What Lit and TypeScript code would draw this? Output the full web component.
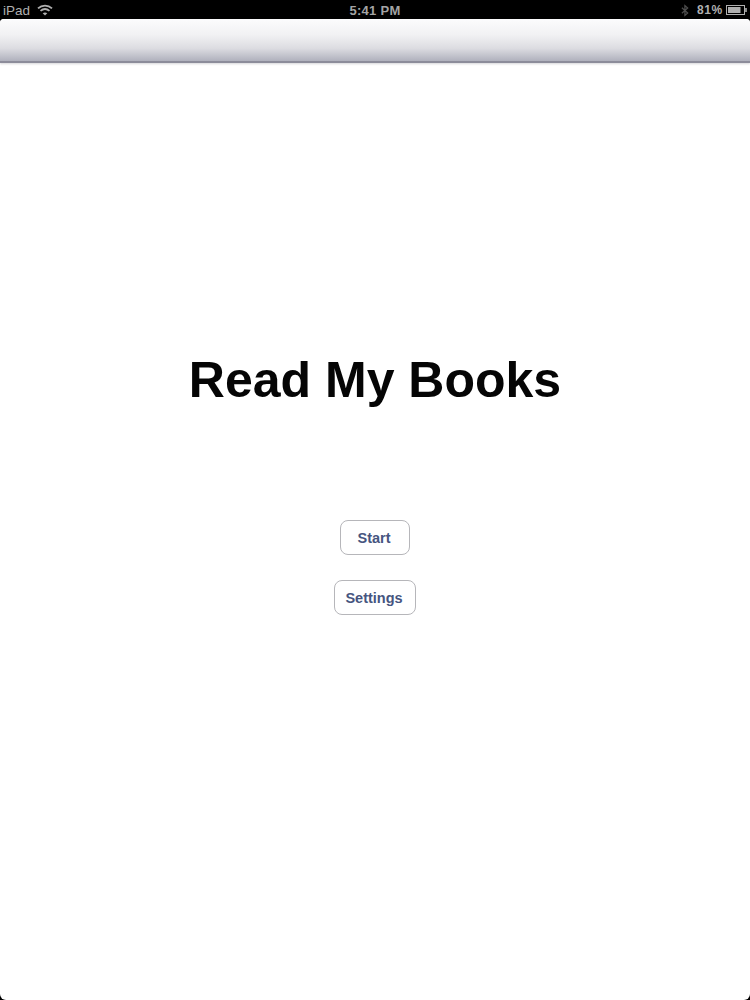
import { LitElement, html, css } from "lit";
import { customElement } from "lit/decorators.js";

@customElement("app-root")
export class AppRoot extends LitElement {
  static styles = css`
    :host {
      display: block;
      width: 750px;
      height: 1000px;
      background: #000;
      font-family: "Liberation Sans", Arial, sans-serif;
      overflow: hidden;
    }
    .status {
      height: 19px;
      background: #000;
      color: #b0b0b0;
      display: grid;
      grid-template-columns: 1fr auto 1fr;
      align-items: center;
      padding: 0 3px 0 3px;
      font-size: 13.5px;
      line-height: 19px;
    }
    .left { display: flex; align-items: center; gap: 7px; }
    .time { font-weight: bold; font-size: 13px; letter-spacing: 0.3px; color: #a4a4a4; }
    .right { display: flex; align-items: center; justify-content: flex-end; gap: 3px; }
    .bt { margin-right: 5px; }
    .pct { font-weight: bold; font-size: 12px; letter-spacing: 0.7px; padding-top: 1px; }
    .screen {
      height: 981px;
      background: #fff;
      border-radius: 4px 4px 6px 6px;
      overflow: hidden;
      display: flex;
      flex-direction: column;
    }
    .navbar {
      height: 44px;
      flex: none;
      box-sizing: border-box;
      border-bottom: 2px solid #8c8c9a;
      background: linear-gradient(#fcfcfd 0%, #f1f1f3 38%, #dcdce1 70%, #b0b1bd 100%);
      box-shadow: 0 1px 2px rgba(120, 120, 130, 0.3);
    }
    .body {
      flex: 1;
      display: flex;
      flex-direction: column;
      align-items: center;
    }
    h1 {
      margin: 288px 0 0;
      font-size: 50px;
      line-height: 58px;
      font-weight: bold;
      color: #050505;
    }
    .buttons {
      margin-top: 111px;
      display: flex;
      flex-direction: column;
      align-items: center;
      gap: 25px;
    }
    button {
      height: 35px;
      box-sizing: border-box;
      background: #fff;
      border: 1px solid #b6b6ba;
      border-radius: 8px;
      color: #46557f;
      font: bold 14.5px "Liberation Sans", Arial, sans-serif;
      padding: 0 2px 0 0;
    }
    .start { width: 70px; }
    .settings { width: 82px; }
    svg { display: block; }
  `;

  render() {
    return html`
      <div class="status">
        <div class="left">
          <span>iPad</span>
          <svg width="16" height="12" viewBox="0 0 16 12" fill="none" stroke="#b0b0b0" stroke-width="1.8">
            <path d="M1 4.4C5 .7 11 .7 15 4.4" />
            <path d="M3.5 6.9C6.2 4.6 9.8 4.6 12.5 6.9" />
            <path d="M8 11.5L5.7 9.2C7 8.1 9 8.1 10.3 9.2Z" fill="#b0b0b0" stroke="none" />
          </svg>
        </div>
        <div class="time">5:41 PM</div>
        <div class="right">
          <svg class="bt" width="8" height="13" viewBox="0 0 9 13" fill="none" stroke="#4e4e4e" stroke-width="1.4">
            <path d="M1 3.5L7.5 9.3L4.4 12V1L7.5 3.7L1 9.5" />
          </svg>
          <span class="pct">81%</span>
          <svg width="21" height="10" viewBox="0 0 21 10">
            <rect x=".5" y=".5" width="18" height="9" fill="none" stroke="#b0b0b0" />
            <rect x="2" y="2" width="12.5" height="6" fill="#b0b0b0" />
            <rect x="19" y="3" width="2" height="4" fill="#8a8a8a" />
          </svg>
        </div>
      </div>
      <div class="screen">
        <div class="navbar"></div>
        <div class="body">
          <h1>Read My Books</h1>
          <div class="buttons">
            <button class="start">Start</button>
            <button class="settings">Settings</button>
          </div>
        </div>
      </div>
    `;
  }
}
